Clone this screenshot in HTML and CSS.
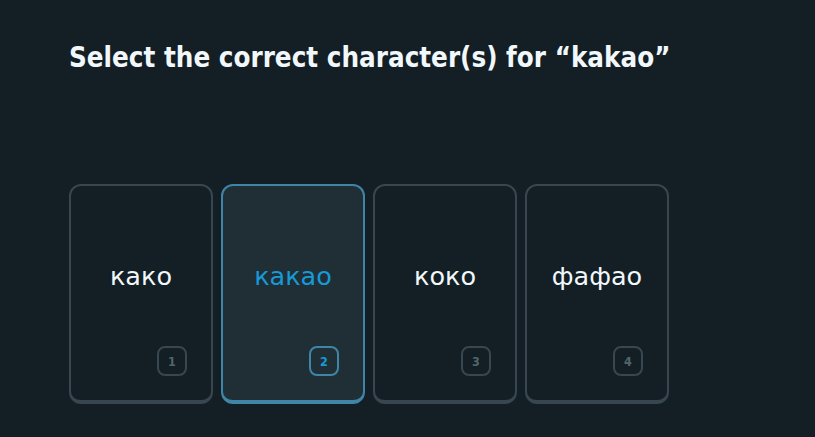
FILE: index.html
```html
<!DOCTYPE html>
<html>
<head>
<meta charset="utf-8">
<link rel="stylesheet" href="styles.css">
</head>
<body>
<div class="page">
  <h1 class="title">Select the correct character(s) for “kakao”</h1>
  <div class="choices">
    <div class="card"><span class="word">како</span><span class="key">1</span></div>
    <div class="card selected"><span class="word">какао</span><span class="key">2</span></div>
    <div class="card"><span class="word">коко</span><span class="key">3</span></div>
    <div class="card"><span class="word">фафао</span><span class="key">4</span></div>
  </div>
</div>
</body>
</html>
```
FILE: styles.css
```css
html, body {
  margin: 0;
  padding: 0;
  background: #131f24;
  height: 100%;
}
.page {
  padding: 39px 0 0 69px;
  box-sizing: border-box;
}
.title {
  margin: 0;
  font-family: "DejaVu Sans Condensed", "DejaVu Sans", sans-serif;
  font-weight: 700;
  font-size: 27.5px;
  line-height: 37px;
  color: #f1f7fb;
}
.choices {
  display: flex;
  gap: 8px;
  margin-top: 108px;
}
.card {
  position: relative;
  width: 144px;
  height: 220px;
  box-sizing: border-box;
  border: 2px solid #37464f;
  border-bottom-width: 4px;
  border-radius: 12px;
  display: flex;
  align-items: flex-start;
  justify-content: center;
  padding-top: 74px;
  font-family: "DejaVu Sans", sans-serif;
  font-size: 25.5px;
  color: #f1f7fb;
}
.card.selected {
  background: #202f36;
  border-color: #3f85a7;
  color: #1899d6;
}
.word {
  line-height: 32px;
}
.key {
  position: absolute;
  right: 24px;
  bottom: 24px;
  width: 30px;
  height: 30px;
  box-sizing: border-box;
  border: 2px solid #37464f;
  border-radius: 8px;
  display: flex;
  align-items: center;
  justify-content: center;
  font-family: "DejaVu Sans Condensed", "DejaVu Sans", sans-serif;
  font-weight: 700;
  font-size: 12.5px;
  color: #52656d;
}
.card.selected .key {
  border-color: #3f85a7;
  color: #1899d6;
}
```
